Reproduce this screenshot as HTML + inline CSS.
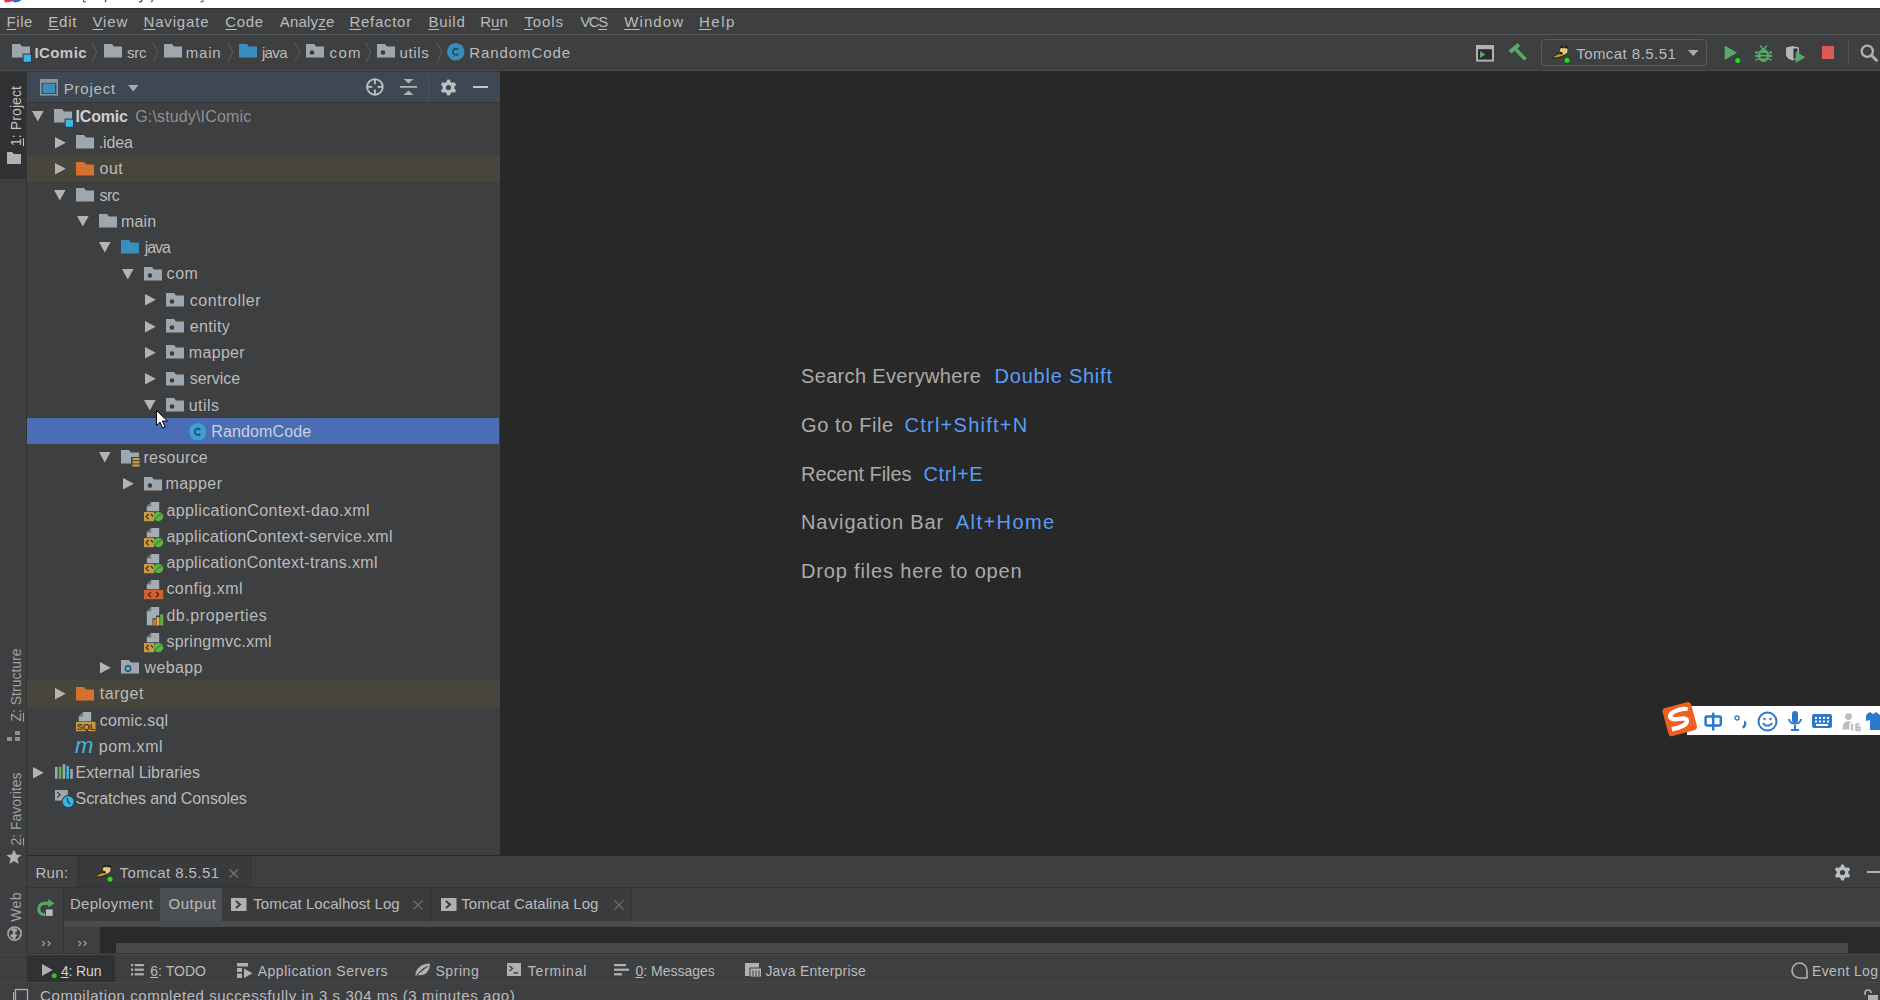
<!DOCTYPE html>
<html><head><meta charset="utf-8"><style>
html,body{margin:0;padding:0;width:1880px;height:1000px;overflow:hidden;background:#3E3F41;position:relative;font-family:"Liberation Sans",sans-serif;}
.t{position:absolute;white-space:pre;}
u{text-decoration:underline;text-underline-offset:2px;text-decoration-thickness:1px;}
u.s{text-underline-offset:1px;}
svg{overflow:visible}
</style></head><body>
<div style="position:absolute;left:0px;top:0px;width:1880px;height:8px;background:#FFFFFF;"></div>
<svg style="position:absolute;left:0px;top:0px;" width="40" height="8" viewBox="0 0 40 8"><path d="M4 0H13L12.5 1.6L5 2.6Z" fill="#D9345A"/><path d="M12.5 0H21.5L19.5 1.4L15 2.6L13 1.6Z" fill="#1E6FD9"/></svg>
<svg style="position:absolute;left:82px;top:0px;" width="130" height="3" viewBox="0 0 130 3"><path d="M1.5 0V1.8H4" stroke="#444" stroke-width="1" fill="none"/><path d="M24 0L23 2" stroke="#444" stroke-width="1.2"/><path d="M60 0C60 1.5 59 2 57 2" stroke="#444" stroke-width="1.2" fill="none"/><path d="M70.5 0L69.5 2" stroke="#444" stroke-width="1.2"/><path d="M121 0V1.8H118.5" stroke="#444" stroke-width="1" fill="none"/></svg>
<div style="position:absolute;left:0px;top:8px;width:1880px;height:1px;background:#2B2D2F;"></div>
<div style="position:absolute;left:0px;top:9px;width:1880px;height:25px;background:#3E3F41;"></div>
<div style="position:absolute;left:0px;top:34px;width:1880px;height:1px;background:#545658;"></div>
<div class="t" style="left:6.6px;top:14.3px;font-size:15px;line-height:15px;color:#BBBBBB;letter-spacing:0.533px;font-weight:normal;"><u>F</u>ile</div>
<div class="t" style="left:48.2px;top:14.3px;font-size:15px;line-height:15px;color:#BBBBBB;letter-spacing:0.833px;font-weight:normal;"><u>E</u>dit</div>
<div class="t" style="left:92.5px;top:14.3px;font-size:15px;line-height:15px;color:#BBBBBB;letter-spacing:0.867px;font-weight:normal;"><u>V</u>iew</div>
<div class="t" style="left:143.5px;top:14.3px;font-size:15px;line-height:15px;color:#BBBBBB;letter-spacing:0.829px;font-weight:normal;"><u>N</u>avigate</div>
<div class="t" style="left:225.3px;top:14.3px;font-size:15px;line-height:15px;color:#BBBBBB;letter-spacing:0.667px;font-weight:normal;"><u>C</u>ode</div>
<div class="t" style="left:279.7px;top:14.3px;font-size:15px;line-height:15px;color:#BBBBBB;letter-spacing:0.217px;font-weight:normal;">Analy<u>z</u>e</div>
<div class="t" style="left:349.4px;top:14.3px;font-size:15px;line-height:15px;color:#BBBBBB;letter-spacing:0.729px;font-weight:normal;"><u>R</u>efactor</div>
<div class="t" style="left:428.4px;top:14.3px;font-size:15px;line-height:15px;color:#BBBBBB;letter-spacing:0.750px;font-weight:normal;"><u>B</u>uild</div>
<div class="t" style="left:480.2px;top:14.3px;font-size:15px;line-height:15px;color:#BBBBBB;letter-spacing:0.000px;font-weight:normal;">R<u>u</u>n</div>
<div class="t" style="left:524.4px;top:14.3px;font-size:15px;line-height:15px;color:#BBBBBB;letter-spacing:0.925px;font-weight:normal;"><u>T</u>ools</div>
<div class="t" style="left:580.2px;top:14.3px;font-size:15px;line-height:15px;color:#BBBBBB;letter-spacing:-1.350px;font-weight:normal;">VC<u>S</u></div>
<div class="t" style="left:624.2px;top:14.3px;font-size:15px;line-height:15px;color:#BBBBBB;letter-spacing:1.100px;font-weight:normal;"><u>W</u>indow</div>
<div class="t" style="left:699.1px;top:14.3px;font-size:15px;line-height:15px;color:#BBBBBB;letter-spacing:1.433px;font-weight:normal;"><u>H</u>elp</div>
<div style="position:absolute;left:0px;top:35px;width:1880px;height:35px;background:#3E3F41;"></div>
<div style="position:absolute;left:0px;top:65px;width:1880px;height:5px;background:#3F3F40;"></div>
<div style="position:absolute;left:0px;top:70px;width:1880px;height:1px;background:#4A4B4C;"></div>
<svg style="position:absolute;left:12px;top:44.3px;" width="20" height="17" viewBox="0 0 20 17"><path d="M0 0H8L10 2.5H18V13.6H0Z" fill="#9EA7AE"/><rect x="10.6" y="9.6" width="9.4" height="9" fill="#263A44"/><rect x="11.6" y="10.6" width="7.4" height="7.2" fill="#42B4E2"/></svg>
<div class="t" style="left:34.4px;top:45.0px;font-size:15px;line-height:15px;color:#C8C8C8;letter-spacing:0.440px;font-weight:bold;">IComic</div>
<svg style="position:absolute;left:91px;top:41.5px;" width="7" height="21" viewBox="0 0 7 21"><path d="M0.8 0.5L5.8 10.5L0.8 20.5" stroke="#55585A" stroke-width="1.1" fill="none"/></svg>
<svg style="position:absolute;left:103.7px;top:44.3px;" width="20" height="17" viewBox="0 0 20 17"><path d="M0 0H8L10 2.5H18V13.6H0Z" fill="#9EA7AE"/></svg>
<div class="t" style="left:126.9px;top:45.0px;font-size:15px;line-height:15px;color:#BBBBBB;letter-spacing:-0.200px;font-weight:normal;">src</div>
<svg style="position:absolute;left:152.3px;top:41.5px;" width="7" height="21" viewBox="0 0 7 21"><path d="M0.8 0.5L5.8 10.5L0.8 20.5" stroke="#55585A" stroke-width="1.1" fill="none"/></svg>
<svg style="position:absolute;left:164px;top:44.3px;" width="20" height="17" viewBox="0 0 20 17"><path d="M0 0H8L10 2.5H18V13.6H0Z" fill="#9EA7AE"/></svg>
<div class="t" style="left:185.7px;top:45.0px;font-size:15px;line-height:15px;color:#BBBBBB;letter-spacing:0.833px;font-weight:normal;">main</div>
<svg style="position:absolute;left:226.5px;top:41.5px;" width="7" height="21" viewBox="0 0 7 21"><path d="M0.8 0.5L5.8 10.5L0.8 20.5" stroke="#55585A" stroke-width="1.1" fill="none"/></svg>
<svg style="position:absolute;left:239.4px;top:44.3px;" width="20" height="17" viewBox="0 0 20 17"><path d="M0 0H8L10 2.5H18V13.6H0Z" fill="#3A8EBE"/></svg>
<div class="t" style="left:261.9px;top:45.0px;font-size:15px;line-height:15px;color:#BBBBBB;letter-spacing:-0.633px;font-weight:normal;">java</div>
<svg style="position:absolute;left:293.5px;top:41.5px;" width="7" height="21" viewBox="0 0 7 21"><path d="M0.8 0.5L5.8 10.5L0.8 20.5" stroke="#55585A" stroke-width="1.1" fill="none"/></svg>
<svg style="position:absolute;left:306px;top:44.3px;" width="20" height="17" viewBox="0 0 20 17"><path d="M0 0H8L10 2.5H18V13.6H0Z" fill="#9EA7AE"/><circle cx="6" cy="8.5" r="2.3" fill="#3A3D40"/></svg>
<div class="t" style="left:329.6px;top:45.0px;font-size:15px;line-height:15px;color:#BBBBBB;letter-spacing:1.300px;font-weight:normal;">com</div>
<svg style="position:absolute;left:365px;top:41.5px;" width="7" height="21" viewBox="0 0 7 21"><path d="M0.8 0.5L5.8 10.5L0.8 20.5" stroke="#55585A" stroke-width="1.1" fill="none"/></svg>
<svg style="position:absolute;left:377px;top:44.3px;" width="20" height="17" viewBox="0 0 20 17"><path d="M0 0H8L10 2.5H18V13.6H0Z" fill="#9EA7AE"/><circle cx="6" cy="8.5" r="2.3" fill="#3A3D40"/></svg>
<div class="t" style="left:399.4px;top:45.0px;font-size:15px;line-height:15px;color:#BBBBBB;letter-spacing:0.675px;font-weight:normal;">utils</div>
<svg style="position:absolute;left:436px;top:41.5px;" width="7" height="21" viewBox="0 0 7 21"><path d="M0.8 0.5L5.8 10.5L0.8 20.5" stroke="#55585A" stroke-width="1.1" fill="none"/></svg>
<svg style="position:absolute;left:447.2px;top:43.2px;" width="17.5" height="17.5" viewBox="0 0 17.5 17.5"><circle cx="8.75" cy="8.75" r="8.75" fill="#3A8DB8"/><path d="M11.35 6.55A3.2 3.2 0 1 0 11.35 10.95" stroke="#1E4D66" stroke-width="1.7" fill="none"/></svg>
<div class="t" style="left:469.3px;top:45.0px;font-size:15px;line-height:15px;color:#BBBBBB;letter-spacing:0.922px;font-weight:normal;">RandomCode</div>
<svg style="position:absolute;left:1476px;top:45px;" width="18" height="16" viewBox="0 0 18 16"><rect x="1" y="1" width="16" height="14.6" fill="#2B2B2B" stroke="#AFB1B3" stroke-width="2"/><rect x="0" y="0" width="18" height="4.2" fill="#AFB1B3"/><path d="M4 6L9.5 9.5L4 13Z" fill="#59A869"/></svg>
<svg style="position:absolute;left:1506px;top:42px;" width="22" height="20" viewBox="0 0 22 20"><path d="M4 10L13 2.5" stroke="#59A869" stroke-width="4.2"/><path d="M8.5 6L19.5 17.5" stroke="#59A869" stroke-width="3.6"/></svg>
<div style="position:absolute;left:1541.4px;top:39.4px;width:166px;height:27px;background:transparent;border:1.2px solid #5A5C5E;border-radius:4px;box-sizing:border-box;"></div>
<svg style="position:absolute;left:1552px;top:43px;" width="20" height="20" viewBox="0 0 20 20"><path d="M0.3 15C3 12.2 6 10.8 9.2 10.2L13.2 10.8C11.5 13.6 6.5 14.8 0.3 15Z" fill="#C9A030" stroke="#1A1200" stroke-width="0.8"/><path d="M8 5L9.5 3.6L11 5.2H13.2L14.8 3.6L15.6 5.6L15.2 9.6L12.6 11.6L9.6 11.2L8.2 8.6Z" fill="#E6CC78"/><path d="M8 5.4L9.5 3.6L11 5.2M13.2 5.2L14.8 3.6L15.6 5.8" stroke="#111" stroke-width="1.2" fill="none"/><circle cx="9.3" cy="10.2" r="1.3" fill="#111"/><circle cx="15" cy="17.2" r="3.1" fill="#145214"/><circle cx="15" cy="17.2" r="2.5" fill="#22DD22"/></svg>
<div class="t" style="left:1576.2px;top:46.1px;font-size:15px;line-height:15px;color:#BBBBBB;letter-spacing:0.450px;font-weight:normal;">Tomcat 8.5.51</div>
<svg style="position:absolute;left:1687.8px;top:50px;" width="10.5" height="6.5" viewBox="0 0 10.5 6.5"><path d="M0 0H10.5L5.25 6.3Z" fill="#A9AAAB"/></svg>
<svg style="position:absolute;left:1724px;top:45px;" width="17" height="19" viewBox="0 0 17 19"><path d="M0.7 0.5L13 7.7L0.7 14.9Z" fill="#59A869"/><circle cx="13.7" cy="15.6" r="3.1" fill="#145214"/><circle cx="13.7" cy="15.6" r="2.5" fill="#22DD22"/></svg>
<svg style="position:absolute;left:1754.5px;top:44.5px;" width="17" height="18" viewBox="0 0 17 18"><path d="M5 0.5L8.5 4.5L12 0.5" stroke="#59A869" stroke-width="1.5" fill="none"/><ellipse cx="8.5" cy="10.5" rx="5.8" ry="6.5" fill="#59A869"/><path d="M0 7.5H3M17 7.5H14M0 11H3M17 11H14M0.5 15L3.5 14M16.5 15L13.5 14" stroke="#59A869" stroke-width="1.8"/><rect x="5.5" y="8" width="6" height="1.8" fill="#3E3F41"/><rect x="5.5" y="11.5" width="6" height="1.8" fill="#3E3F41"/></svg>
<svg style="position:absolute;left:1786px;top:45.9px;" width="20" height="18" viewBox="0 0 20 18"><path d="M0 1.5L6.5 0L13 1.5V8C13 11.5 10 13.5 6.5 14.5C3 13.5 0 11.5 0 8Z" fill="#B4B6B8"/><path d="M7.5 2.5H11.5V9C11.5 11 10 12 8.5 12.8L7.5 13Z" fill="#2E2F30"/><path d="M9.6 5.3L19.2 11.2L9.6 17.1Z" fill="#59A869"/></svg>
<div style="position:absolute;left:1821.7px;top:46.3px;width:12.7px;height:13.2px;background:#DB5A55;"></div>
<div style="position:absolute;left:1848px;top:40px;width:1px;height:24px;background:#515354;"></div>
<svg style="position:absolute;left:1859px;top:43px;" width="21" height="21" viewBox="0 0 21 21"><circle cx="8.3" cy="8.2" r="5.6" fill="none" stroke="#AFB1B3" stroke-width="2.3"/><path d="M12.4 12.3L18.4 18.3" stroke="#AFB1B3" stroke-width="2.8"/></svg>
<div style="position:absolute;left:0px;top:71px;width:26px;height:883px;background:#3E3F41;"></div>
<div style="position:absolute;left:0px;top:71px;width:26px;height:108px;background:#2F3132;"></div>
<div class="t" style="left:16.1px;top:116px;font-size:14px;line-height:14px;color:#C4C4C4;letter-spacing:0.1px;transform:translate(-50%,-50%) rotate(-90deg);"><u>1</u>: Project</div>
<svg style="position:absolute;left:7px;top:152px;" width="14" height="12" viewBox="0 0 14 12"><path d="M0 0H5L7 2H14V12H0Z" fill="#AFB1B3"/></svg>
<div class="t" style="left:16.1px;top:684.6px;font-size:14px;line-height:14px;color:#A0A2A4;letter-spacing:0px;transform:translate(-50%,-50%) rotate(-90deg);"><u>Z</u>: Structure</div>
<svg style="position:absolute;left:7px;top:731px;" width="14" height="10" viewBox="0 0 14 10"><rect x="8" y="0" width="5" height="4" fill="#8E9194"/><rect x="0" y="6" width="5" height="4" fill="#8E9194"/><rect x="8" y="6" width="5" height="4" fill="#8E9194"/></svg>
<div class="t" style="left:16.1px;top:808.7px;font-size:14px;line-height:14px;color:#A0A2A4;letter-spacing:0px;transform:translate(-50%,-50%) rotate(-90deg);"><u>2</u>: Favorites</div>
<svg style="position:absolute;left:6px;top:849px;" width="16" height="16" viewBox="0 0 16 16"><path d="M8 0.5L10.2 5.6L15.5 6L11.4 9.5L12.7 15L8 12.1L3.3 15L4.6 9.5L0.5 6L5.8 5.6Z" fill="#AFB1B3"/></svg>
<div class="t" style="left:16.1px;top:907.3px;font-size:14px;line-height:14px;color:#A0A2A4;letter-spacing:0.4px;transform:translate(-50%,-50%) rotate(-90deg);">Web</div>
<svg style="position:absolute;left:6.5px;top:926px;" width="16" height="16" viewBox="0 0 16 16"><circle cx="7.6" cy="7.6" r="6.6" fill="none" stroke="#A6A8AA" stroke-width="1.6"/><path d="M3 4.5C5 4 6.5 5 6 7C5.5 8.5 3.5 8.5 3.2 10C4.5 11 6 12 6.5 13.5L8.5 13C8 11 9.5 10 10.5 9C9.5 8 8 8.5 7.8 7C8.5 5.5 10 5.8 10.5 4C9.5 2.5 7 2 5 2.5Z" fill="#A6A8AA"/><path d="M12 8.5L13.5 10L12.5 12Z" fill="#A6A8AA"/></svg>
<div style="position:absolute;left:26px;top:71px;width:1px;height:883px;background:#333435;"></div>
<div style="position:absolute;left:27px;top:71px;width:473px;height:785px;background:#3E3F41;"></div>
<div style="position:absolute;left:27px;top:71px;width:473px;height:31px;background:#3D4854;"></div>
<div style="position:absolute;left:0px;top:70.6px;width:500px;height:1px;background:#323436;"></div>
<div style="position:absolute;left:27px;top:102px;width:473px;height:1px;background:#34373A;"></div>
<svg style="position:absolute;left:40px;top:79.3px;" width="18" height="16.6" viewBox="0 0 18 16.6"><rect x="0.8" y="0.8" width="16.4" height="15" fill="none" stroke="#8A959D" stroke-width="1.6"/><rect x="0.8" y="0.8" width="16.4" height="3" fill="#8A959D"/><rect x="2.2" y="4" width="13.6" height="10.6" fill="#2F4250"/><rect x="2.8" y="4.6" width="12.4" height="9.6" fill="#3B8EBA"/></svg>
<div class="t" style="left:63.8px;top:80.9px;font-size:15px;line-height:15px;color:#BBBBBB;letter-spacing:0.783px;font-weight:normal;">Project</div>
<svg style="position:absolute;left:128px;top:85px;" width="10.5" height="7" viewBox="0 0 10.5 7"><path d="M0 0H10.5L5.25 6.5Z" fill="#A9AAAB"/></svg>
<svg style="position:absolute;left:366px;top:78px;" width="18" height="18" viewBox="0 0 18 18"><circle cx="8.9" cy="8.9" r="7.8" fill="none" stroke="#BAC0C6" stroke-width="1.9"/><path d="M8.9 1.5V6.3M8.9 11.5V16.3M1.5 8.9H6.3M11.5 8.9H16.3" stroke="#BAC0C6" stroke-width="1.9"/></svg>
<svg style="position:absolute;left:400px;top:79px;" width="17" height="16" viewBox="0 0 17 16"><path d="M3.5 0H13.5L8.5 4.5Z" fill="#AFB1B3"/><rect x="0" y="7" width="17" height="1.8" fill="#AFB1B3"/><path d="M3.5 16H13.5L8.5 11.5Z" fill="#AFB1B3"/></svg>
<div style="position:absolute;left:428px;top:73px;width:1px;height:27px;background:#4A5561;"></div>
<svg style="position:absolute;left:440.2px;top:78.5px;" width="17" height="17" viewBox="0 0 17 17"><circle cx="8.5" cy="8.5" r="8" fill="#BCC0C4"/><circle cx="16.80" cy="8.50" r="2.5" fill="#3D4854"/><circle cx="12.65" cy="15.69" r="2.5" fill="#3D4854"/><circle cx="4.35" cy="15.69" r="2.5" fill="#3D4854"/><circle cx="0.20" cy="8.50" r="2.5" fill="#3D4854"/><circle cx="4.35" cy="1.31" r="2.5" fill="#3D4854"/><circle cx="12.65" cy="1.31" r="2.5" fill="#3D4854"/><circle cx="8.5" cy="8.5" r="2.6" fill="#3D4854"/></svg>
<div style="position:absolute;left:473px;top:85.8px;width:15.4px;height:2.4px;background:#C2C7CC;"></div>
<div style="position:absolute;left:27px;top:155.4px;width:471px;height:26.5px;background:#48453A;"></div>
<div style="position:absolute;left:27px;top:680.4px;width:471px;height:26.5px;background:#48453A;"></div>
<div style="position:absolute;left:498px;top:155.4px;width:2px;height:26.5px;background:#454545;"></div>
<div style="position:absolute;left:498px;top:680.4px;width:2px;height:26.5px;background:#454545;"></div>
<div style="position:absolute;left:27px;top:418.2px;width:472px;height:25.5px;background:#4A6DB4;"></div>
<svg style="position:absolute;left:32.0px;top:111.1px;" width="12" height="11" viewBox="0 0 12 11"><path d="M0 0H11.6L5.8 10.4Z" fill="#B2B3B4"/></svg>
<svg style="position:absolute;left:54.0px;top:109.1px;" width="20" height="17" viewBox="0 0 20 17"><path d="M0 0H8L10 2.5H18V13.6H0Z" fill="#9EA7AE"/><rect x="10.6" y="9.6" width="9.4" height="9" fill="#263A44"/><rect x="11.6" y="10.6" width="7.4" height="7.2" fill="#42B4E2"/></svg>
<div class="t" style="left:75.6px;top:108.86px;font-size:16px;line-height:16px;color:#CFCFCF;letter-spacing:-0.220px;font-weight:bold;">IComic</div>
<div class="t" style="left:135.2px;top:108.86px;font-size:16px;line-height:16px;color:#8F9193;letter-spacing:0.157px;font-weight:normal;">G:\study\IComic</div>
<svg style="position:absolute;left:55.24999999999999px;top:136.85px;" width="11" height="12" viewBox="0 0 11 12"><path d="M0 0L10.8 5.7L0 11.4Z" fill="#B2B3B4"/></svg>
<svg style="position:absolute;left:76.45px;top:135.35px;" width="20" height="17" viewBox="0 0 20 17"><path d="M0 0H8L10 2.5H18V13.6H0Z" fill="#9EA7AE"/></svg>
<div class="t" style="left:98.8px;top:135.11px;font-size:16px;line-height:16px;color:#BBBBBB;letter-spacing:-0.150px;font-weight:normal;">.idea</div>
<svg style="position:absolute;left:55.24999999999999px;top:163.1px;" width="11" height="12" viewBox="0 0 11 12"><path d="M0 0L10.8 5.7L0 11.4Z" fill="#B2B3B4"/></svg>
<svg style="position:absolute;left:76.45px;top:161.6px;" width="20" height="17" viewBox="0 0 20 17"><path d="M0 0H8L10 2.5H18V13.6H0Z" fill="#D5702F"/></svg>
<div class="t" style="left:99.6px;top:161.36px;font-size:16px;line-height:16px;color:#BBBBBB;letter-spacing:0.450px;font-weight:normal;">out</div>
<svg style="position:absolute;left:54.449999999999996px;top:189.85px;" width="12" height="11" viewBox="0 0 12 11"><path d="M0 0H11.6L5.8 10.4Z" fill="#B2B3B4"/></svg>
<svg style="position:absolute;left:76.45px;top:187.85px;" width="20" height="17" viewBox="0 0 20 17"><path d="M0 0H8L10 2.5H18V13.6H0Z" fill="#9EA7AE"/></svg>
<div class="t" style="left:99.6px;top:187.61px;font-size:16px;line-height:16px;color:#BBBBBB;letter-spacing:-0.600px;font-weight:normal;">src</div>
<svg style="position:absolute;left:76.89999999999999px;top:216.1px;" width="12" height="11" viewBox="0 0 12 11"><path d="M0 0H11.6L5.8 10.4Z" fill="#B2B3B4"/></svg>
<svg style="position:absolute;left:98.9px;top:214.1px;" width="20" height="17" viewBox="0 0 20 17"><path d="M0 0H8L10 2.5H18V13.6H0Z" fill="#9EA7AE"/></svg>
<div class="t" style="left:121.1px;top:213.86px;font-size:16px;line-height:16px;color:#BBBBBB;letter-spacing:0.100px;font-weight:normal;">main</div>
<svg style="position:absolute;left:99.35px;top:242.35px;" width="12" height="11" viewBox="0 0 12 11"><path d="M0 0H11.6L5.8 10.4Z" fill="#B2B3B4"/></svg>
<svg style="position:absolute;left:121.35px;top:240.35px;" width="20" height="17" viewBox="0 0 20 17"><path d="M0 0H8L10 2.5H18V13.6H0Z" fill="#3A8EBE"/></svg>
<div class="t" style="left:144.7px;top:240.11px;font-size:16px;line-height:16px;color:#BBBBBB;letter-spacing:-1.033px;font-weight:normal;">java</div>
<svg style="position:absolute;left:121.79999999999998px;top:268.6px;" width="12" height="11" viewBox="0 0 12 11"><path d="M0 0H11.6L5.8 10.4Z" fill="#B2B3B4"/></svg>
<svg style="position:absolute;left:143.8px;top:266.6px;" width="20" height="17" viewBox="0 0 20 17"><path d="M0 0H8L10 2.5H18V13.6H0Z" fill="#9EA7AE"/><circle cx="6" cy="8.5" r="2.3" fill="#3A3D40"/></svg>
<div class="t" style="left:166.6px;top:266.36px;font-size:16px;line-height:16px;color:#BBBBBB;letter-spacing:0.550px;font-weight:normal;">com</div>
<svg style="position:absolute;left:145.05px;top:294.35px;" width="11" height="12" viewBox="0 0 11 12"><path d="M0 0L10.8 5.7L0 11.4Z" fill="#B2B3B4"/></svg>
<svg style="position:absolute;left:166.25px;top:292.85px;" width="20" height="17" viewBox="0 0 20 17"><path d="M0 0H8L10 2.5H18V13.6H0Z" fill="#9EA7AE"/><circle cx="6" cy="8.5" r="2.3" fill="#3A3D40"/></svg>
<div class="t" style="left:189.7px;top:292.61px;font-size:16px;line-height:16px;color:#BBBBBB;letter-spacing:0.567px;font-weight:normal;">controller</div>
<svg style="position:absolute;left:145.05px;top:320.6px;" width="11" height="12" viewBox="0 0 11 12"><path d="M0 0L10.8 5.7L0 11.4Z" fill="#B2B3B4"/></svg>
<svg style="position:absolute;left:166.25px;top:319.1px;" width="20" height="17" viewBox="0 0 20 17"><path d="M0 0H8L10 2.5H18V13.6H0Z" fill="#9EA7AE"/><circle cx="6" cy="8.5" r="2.3" fill="#3A3D40"/></svg>
<div class="t" style="left:189.8px;top:318.86px;font-size:16px;line-height:16px;color:#BBBBBB;letter-spacing:0.360px;font-weight:normal;">entity</div>
<svg style="position:absolute;left:145.05px;top:346.85px;" width="11" height="12" viewBox="0 0 11 12"><path d="M0 0L10.8 5.7L0 11.4Z" fill="#B2B3B4"/></svg>
<svg style="position:absolute;left:166.25px;top:345.35px;" width="20" height="17" viewBox="0 0 20 17"><path d="M0 0H8L10 2.5H18V13.6H0Z" fill="#9EA7AE"/><circle cx="6" cy="8.5" r="2.3" fill="#3A3D40"/></svg>
<div class="t" style="left:188.8px;top:345.11px;font-size:16px;line-height:16px;color:#BBBBBB;letter-spacing:0.320px;font-weight:normal;">mapper</div>
<svg style="position:absolute;left:145.05px;top:373.1px;" width="11" height="12" viewBox="0 0 11 12"><path d="M0 0L10.8 5.7L0 11.4Z" fill="#B2B3B4"/></svg>
<svg style="position:absolute;left:166.25px;top:371.6px;" width="20" height="17" viewBox="0 0 20 17"><path d="M0 0H8L10 2.5H18V13.6H0Z" fill="#9EA7AE"/><circle cx="6" cy="8.5" r="2.3" fill="#3A3D40"/></svg>
<div class="t" style="left:189.8px;top:371.36px;font-size:16px;line-height:16px;color:#BBBBBB;letter-spacing:-0.050px;font-weight:normal;">service</div>
<svg style="position:absolute;left:144.25px;top:399.85px;" width="12" height="11" viewBox="0 0 12 11"><path d="M0 0H11.6L5.8 10.4Z" fill="#B2B3B4"/></svg>
<svg style="position:absolute;left:166.25px;top:397.85px;" width="20" height="17" viewBox="0 0 20 17"><path d="M0 0H8L10 2.5H18V13.6H0Z" fill="#9EA7AE"/><circle cx="6" cy="8.5" r="2.3" fill="#3A3D40"/></svg>
<div class="t" style="left:188.8px;top:397.61px;font-size:16px;line-height:16px;color:#BBBBBB;letter-spacing:0.425px;font-weight:normal;">utils</div>
<svg style="position:absolute;left:188.89999999999998px;top:422.90000000000003px;" width="17.5" height="17.5" viewBox="0 0 17.5 17.5"><circle cx="8.75" cy="8.75" r="8.75" fill="#3E9FD3"/><path d="M11.35 6.55A3.2 3.2 0 1 0 11.35 10.95" stroke="#1C4E6C" stroke-width="1.7" fill="none"/></svg>
<div class="t" style="left:211.3px;top:423.86px;font-size:16px;line-height:16px;color:#CCD2DD;letter-spacing:0.133px;font-weight:normal;">RandomCode</div>
<svg style="position:absolute;left:99.35px;top:452.35px;" width="12" height="11" viewBox="0 0 12 11"><path d="M0 0H11.6L5.8 10.4Z" fill="#B2B3B4"/></svg>
<svg style="position:absolute;left:121.35px;top:450.35px;" width="20" height="17" viewBox="0 0 20 17"><path d="M0 0H8L10 2.5H18V13.6H0Z" fill="#9EA7AE"/><rect x="10" y="7" width="10" height="10" fill="#3E3F41"/><rect x="11.5" y="8" width="7" height="2.2" fill="#C9A04A"/><rect x="11.5" y="11.2" width="7" height="2.2" fill="#C9A04A"/><rect x="11.5" y="14.4" width="7" height="2.2" fill="#C9A04A"/></svg>
<div class="t" style="left:143.5px;top:450.11px;font-size:16px;line-height:16px;color:#BBBBBB;letter-spacing:0.286px;font-weight:normal;">resource</div>
<svg style="position:absolute;left:122.6px;top:478.1px;" width="11" height="12" viewBox="0 0 11 12"><path d="M0 0L10.8 5.7L0 11.4Z" fill="#B2B3B4"/></svg>
<svg style="position:absolute;left:143.8px;top:476.6px;" width="20" height="17" viewBox="0 0 20 17"><path d="M0 0H8L10 2.5H18V13.6H0Z" fill="#9EA7AE"/><circle cx="6" cy="8.5" r="2.3" fill="#3A3D40"/></svg>
<div class="t" style="left:165.4px;top:476.36px;font-size:16px;line-height:16px;color:#BBBBBB;letter-spacing:0.480px;font-weight:normal;">mapper</div>
<svg style="position:absolute;left:143.8px;top:501.65000000000003px;" width="20" height="20" viewBox="0 0 20 20"><path d="M7.2 0H15.2V9.2H2.8V4.6Z" fill="#A4ADB4"/><path d="M2.8 4.6L7.2 0V4.6Z" fill="#6E767C"/><rect x="0" y="10" width="10" height="9.2" fill="#C99A45"/><path d="M4.6 12L2.2 14.6L4.6 17.2M7 12L9 14.6" stroke="#4A3413" stroke-width="1.3" fill="none"/><ellipse cx="14.2" cy="14.6" rx="5" ry="4.6" fill="#5DB341"/><path d="M10.8 17.5C12.5 15 14.5 13.5 17.5 12.2" stroke="#2F6A22" stroke-width="1" fill="none"/></svg>
<div class="t" style="left:166.4px;top:502.61px;font-size:16px;line-height:16px;color:#BBBBBB;letter-spacing:0.404px;font-weight:normal;">applicationContext-dao.xml</div>
<svg style="position:absolute;left:143.8px;top:527.9px;" width="20" height="20" viewBox="0 0 20 20"><path d="M7.2 0H15.2V9.2H2.8V4.6Z" fill="#A4ADB4"/><path d="M2.8 4.6L7.2 0V4.6Z" fill="#6E767C"/><rect x="0" y="10" width="10" height="9.2" fill="#C99A45"/><path d="M4.6 12L2.2 14.6L4.6 17.2M7 12L9 14.6" stroke="#4A3413" stroke-width="1.3" fill="none"/><ellipse cx="14.2" cy="14.6" rx="5" ry="4.6" fill="#5DB341"/><path d="M10.8 17.5C12.5 15 14.5 13.5 17.5 12.2" stroke="#2F6A22" stroke-width="1" fill="none"/></svg>
<div class="t" style="left:166.4px;top:528.86px;font-size:16px;line-height:16px;color:#BBBBBB;letter-spacing:0.314px;font-weight:normal;">applicationContext-service.xml</div>
<svg style="position:absolute;left:143.8px;top:554.15px;" width="20" height="20" viewBox="0 0 20 20"><path d="M7.2 0H15.2V9.2H2.8V4.6Z" fill="#A4ADB4"/><path d="M2.8 4.6L7.2 0V4.6Z" fill="#6E767C"/><rect x="0" y="10" width="10" height="9.2" fill="#C99A45"/><path d="M4.6 12L2.2 14.6L4.6 17.2M7 12L9 14.6" stroke="#4A3413" stroke-width="1.3" fill="none"/><ellipse cx="14.2" cy="14.6" rx="5" ry="4.6" fill="#5DB341"/><path d="M10.8 17.5C12.5 15 14.5 13.5 17.5 12.2" stroke="#2F6A22" stroke-width="1" fill="none"/></svg>
<div class="t" style="left:166.4px;top:555.11px;font-size:16px;line-height:16px;color:#BBBBBB;letter-spacing:0.344px;font-weight:normal;">applicationContext-trans.xml</div>
<svg style="position:absolute;left:143.8px;top:580.4px;" width="20" height="20" viewBox="0 0 20 20"><path d="M7.2 0H15.2V9.2H2.8V4.6Z" fill="#A4ADB4"/><path d="M2.8 4.6L7.2 0V4.6Z" fill="#6E767C"/><rect x="0" y="10" width="19.2" height="9.2" fill="#CF6231"/><path d="M7 12L4.4 14.6L7 17.2M12 12L14.6 14.6L12 17.2" stroke="#5A2410" stroke-width="1.3" fill="none"/></svg>
<div class="t" style="left:166.4px;top:581.36px;font-size:16px;line-height:16px;color:#BBBBBB;letter-spacing:0.467px;font-weight:normal;">config.xml</div>
<svg style="position:absolute;left:143.8px;top:606.65px;" width="20" height="20" viewBox="0 0 20 20"><path d="M7.2 0H15.2V18.2H2.8V4.6Z" fill="#A4ADB4"/><path d="M2.8 4.6L7.2 0V4.6Z" fill="#6E767C"/><path d="M8.5 18.4V11.2H12V8.6H15.5V6H20V18.4Z" fill="#3E3F41"/><rect x="9.2" y="12.4" width="2.8" height="6" fill="#E0703A"/><rect x="12.6" y="10.2" width="2.8" height="8.2" fill="#E8B53E"/><rect x="16.2" y="7.4" width="3" height="11" fill="#5DB341"/></svg>
<div class="t" style="left:166.4px;top:607.61px;font-size:16px;line-height:16px;color:#BBBBBB;letter-spacing:0.575px;font-weight:normal;">db.properties</div>
<svg style="position:absolute;left:143.8px;top:632.9px;" width="20" height="20" viewBox="0 0 20 20"><path d="M7.2 0H15.2V9.2H2.8V4.6Z" fill="#A4ADB4"/><path d="M2.8 4.6L7.2 0V4.6Z" fill="#6E767C"/><rect x="0" y="10" width="10" height="9.2" fill="#C99A45"/><path d="M4.6 12L2.2 14.6L4.6 17.2M7 12L9 14.6" stroke="#4A3413" stroke-width="1.3" fill="none"/><ellipse cx="14.2" cy="14.6" rx="5" ry="4.6" fill="#5DB341"/><path d="M10.8 17.5C12.5 15 14.5 13.5 17.5 12.2" stroke="#2F6A22" stroke-width="1" fill="none"/></svg>
<div class="t" style="left:166.4px;top:633.86px;font-size:16px;line-height:16px;color:#BBBBBB;letter-spacing:0.250px;font-weight:normal;">springmvc.xml</div>
<svg style="position:absolute;left:100.15px;top:661.85px;" width="11" height="12" viewBox="0 0 11 12"><path d="M0 0L10.8 5.7L0 11.4Z" fill="#B2B3B4"/></svg>
<svg style="position:absolute;left:121.35px;top:660.35px;" width="20" height="17" viewBox="0 0 20 17"><path d="M0 0H8L10 2.5H18V13.6H0Z" fill="#9EA7AE"/><circle cx="7" cy="8.5" r="3.4" fill="#3A3D40"/><circle cx="7" cy="8.5" r="2.3" fill="#3FB1E4"/></svg>
<div class="t" style="left:144.5px;top:660.11px;font-size:16px;line-height:16px;color:#BBBBBB;letter-spacing:0.360px;font-weight:normal;">webapp</div>
<svg style="position:absolute;left:55.24999999999999px;top:688.1px;" width="11" height="12" viewBox="0 0 11 12"><path d="M0 0L10.8 5.7L0 11.4Z" fill="#B2B3B4"/></svg>
<svg style="position:absolute;left:76.45px;top:686.6px;" width="20" height="17" viewBox="0 0 20 17"><path d="M0 0H8L10 2.5H18V13.6H0Z" fill="#D5702F"/></svg>
<div class="t" style="left:99.7px;top:686.36px;font-size:16px;line-height:16px;color:#BBBBBB;letter-spacing:0.580px;font-weight:normal;">target</div>
<svg style="position:absolute;left:76.45px;top:711.65px;" width="20" height="20" viewBox="0 0 20 20"><path d="M7.2 0H15.2V9.2H2.8V4.6Z" fill="#A4ADB4"/><path d="M2.8 4.6L7.2 0V4.6Z" fill="#6E767C"/><rect x="0" y="9.8" width="19.5" height="9.4" fill="#C99A45"/><text x="0.8" y="18.3" font-family="Liberation Sans" font-weight="bold" font-size="9.2" fill="#4A3413" letter-spacing="-0.1">SQL</text></svg>
<div class="t" style="left:99.7px;top:712.61px;font-size:16px;line-height:16px;color:#BBBBBB;letter-spacing:0.225px;font-weight:normal;">comic.sql</div>
<svg style="position:absolute;left:76.45px;top:737.9px;" width="20" height="20" viewBox="0 0 20 20"><text x="-1" y="15" font-family="Liberation Sans" font-style="italic" font-size="22" fill="#46B5DF">m</text></svg>
<div class="t" style="left:98.7px;top:738.86px;font-size:16px;line-height:16px;color:#BBBBBB;letter-spacing:0.583px;font-weight:normal;">pom.xml</div>
<svg style="position:absolute;left:32.8px;top:766.85px;" width="11" height="12" viewBox="0 0 11 12"><path d="M0 0L10.8 5.7L0 11.4Z" fill="#B2B3B4"/></svg>
<svg style="position:absolute;left:54.0px;top:764.15px;" width="20" height="20" viewBox="0 0 20 20"><rect x="1" y="2.9" width="2.6" height="11.9" fill="#9EA7AE"/><rect x="4.8" y="2.9" width="2.6" height="11.9" fill="#5DB341"/><rect x="8.6" y="0.2" width="2.6" height="14.6" fill="#9EA7AE"/><rect x="12.4" y="1.9" width="2.6" height="12.9" fill="#3FB1E4"/><rect x="16.2" y="4.9" width="2.6" height="9.9" fill="#9EA7AE"/></svg>
<div class="t" style="left:75.6px;top:765.11px;font-size:16px;line-height:16px;color:#BBBBBB;letter-spacing:-0.006px;font-weight:normal;">External Libraries</div>
<svg style="position:absolute;left:54.0px;top:790.4px;" width="20" height="20" viewBox="0 0 20 20"><rect x="1" y="0" width="12.8" height="10.6" fill="#9EA7AE"/><path d="M3.2 2.2L6.2 4.8L3.2 7.4" stroke="#2E3B44" stroke-width="1.2" fill="none"/><circle cx="14.2" cy="11.6" r="6.6" fill="#2A4A5C"/><circle cx="14.2" cy="11.6" r="5.4" fill="#3FB1E4"/><path d="M13.1 8.2L14 12L16.3 14" stroke="#1D3E52" stroke-width="1.3" fill="none"/></svg>
<div class="t" style="left:75.6px;top:791.36px;font-size:16px;line-height:16px;color:#BBBBBB;letter-spacing:-0.105px;font-weight:normal;">Scratches and Consoles</div>
<div style="position:absolute;left:500px;top:71px;width:1380px;height:784px;background:#282828;"></div>
<div class="t" style="left:801px;top:365.57px;font-size:20px;line-height:20px;color:#ABABAB;letter-spacing:0.337px;font-weight:normal;">Search Everywhere</div>
<div class="t" style="left:994.6px;top:365.57px;font-size:20px;line-height:20px;color:#589DF6;letter-spacing:0.764px;font-weight:normal;">Double Shift</div>
<div class="t" style="left:801px;top:414.87px;font-size:20px;line-height:20px;color:#ABABAB;letter-spacing:0.611px;font-weight:normal;">Go to File</div>
<div class="t" style="left:904.5px;top:414.87px;font-size:20px;line-height:20px;color:#589DF6;letter-spacing:1.255px;font-weight:normal;">Ctrl+Shift+N</div>
<div class="t" style="left:801px;top:463.67px;font-size:20px;line-height:20px;color:#ABABAB;letter-spacing:-0.064px;font-weight:normal;">Recent Files</div>
<div class="t" style="left:923.5px;top:463.67px;font-size:20px;line-height:20px;color:#589DF6;letter-spacing:0.600px;font-weight:normal;">Ctrl+E</div>
<div class="t" style="left:801px;top:511.87px;font-size:20px;line-height:20px;color:#ABABAB;letter-spacing:0.846px;font-weight:normal;">Navigation Bar</div>
<div class="t" style="left:955.8px;top:511.87px;font-size:20px;line-height:20px;color:#589DF6;letter-spacing:1.429px;font-weight:normal;">Alt+Home</div>
<div class="t" style="left:801px;top:561.07px;font-size:20px;line-height:20px;color:#ABABAB;letter-spacing:0.832px;font-weight:normal;">Drop files here to open</div>
<div style="position:absolute;left:1687px;top:706px;width:193px;height:29px;background:#FFFFFF;"></div>
<svg style="position:absolute;left:1660px;top:700px;" width="40" height="38" viewBox="0 0 40 38"><g transform="rotate(-15 20 19)"><rect x="5" y="4.5" width="29.5" height="29" rx="3.5" fill="#EE5F22"/><path d="M30 11.8C25.5 9.2 15 9.2 11.8 12.6C9.2 15.6 13 18 19 18.6C24 19 27 20.2 26 23.2C24.6 26.8 15 27.2 9.5 26.8" stroke="#FFFFFF" stroke-width="4.4" fill="none"/><path d="M16 14.2C19 13.3 24.5 13.3 29 14" stroke="#EE5F22" stroke-width="2" fill="none" stroke-linecap="round"/><path d="M10 23.2C13.5 22.8 19 22.6 21.5 22.9" stroke="#EE5F22" stroke-width="2" fill="none" stroke-linecap="round"/></g></svg>
<svg style="position:absolute;left:1704px;top:712px;" width="19" height="20" viewBox="0 0 19 20"><rect x="1.6" y="4.6" width="15.2" height="8.8" rx="1.2" fill="none" stroke="#2B79C9" stroke-width="2.5"/><path d="M9.2 1.8V17.6" stroke="#2B79C9" stroke-width="2.5" stroke-linecap="round"/></svg>
<svg style="position:absolute;left:1733px;top:712px;" width="20" height="20" viewBox="0 0 20 20"><circle cx="4" cy="6" r="2" fill="none" stroke="#2B79C9" stroke-width="1.3"/><path d="M11 10C12 10 12.5 11 12 13L10 16" stroke="#2B79C9" stroke-width="2.4" fill="none"/></svg>
<svg style="position:absolute;left:1757px;top:711px;" width="21" height="21" viewBox="0 0 21 21"><circle cx="10.5" cy="10.5" r="9" fill="none" stroke="#2B79C9" stroke-width="2"/><circle cx="7.5" cy="8" r="1.2" fill="#2B79C9"/><circle cx="13.5" cy="8" r="1.2" fill="#2B79C9"/><path d="M6 12C8 15.5 13 15.5 15 12" stroke="#2B79C9" stroke-width="1.8" fill="none"/></svg>
<svg style="position:absolute;left:1787px;top:710px;" width="16" height="22" viewBox="0 0 16 22"><rect x="5" y="1" width="6" height="12" rx="3" fill="#2B79C9"/><path d="M2 9C2 15 14 15 14 9M8 15V20M4 20H12" stroke="#2B79C9" stroke-width="2" fill="none"/></svg>
<svg style="position:absolute;left:1811px;top:713px;" width="22" height="16" viewBox="0 0 22 16"><rect x="1" y="1" width="20" height="14" rx="2" fill="#2B79C9"/><g fill="#fff"><rect x="4" y="4" width="2" height="2"/><rect x="8" y="4" width="2" height="2"/><rect x="12" y="4" width="2" height="2"/><rect x="16" y="4" width="2" height="2"/><rect x="4" y="7.5" width="2" height="2"/><rect x="8" y="7.5" width="2" height="2"/><rect x="12" y="7.5" width="2" height="2"/><rect x="16" y="7.5" width="2" height="2"/><rect x="5" y="11" width="12" height="2"/></g></svg>
<svg style="position:absolute;left:1840px;top:712px;" width="22" height="20" viewBox="0 0 22 20"><circle cx="8.5" cy="4.6" r="3.4" fill="#B9BDC4"/><path d="M2.5 17.5C2.5 11.5 4.5 9.2 8.5 9.2C12.5 9.2 14.5 11.5 14.5 17.5Z" fill="#B9BDC4"/><rect x="9.5" y="10.5" width="11.5" height="9" fill="#fff"/><rect x="11" y="12" width="2.2" height="6.5" fill="#B9BDC4"/><path d="M19.5 12.2H16.2V18.3H19.6V15.2H16.5" stroke="#B9BDC4" stroke-width="2" fill="none"/></svg>
<svg style="position:absolute;left:1866px;top:711px;" width="14" height="20" viewBox="0 0 14 20"><path d="M4 1L7 3L10 1L14 4L14 19L4 19L4 9L0 10L0 4Z" fill="#2B79C9"/></svg>
<div style="position:absolute;left:27px;top:855px;width:1853px;height:1px;background:#2A2A2A;"></div>
<div style="position:absolute;left:27px;top:856px;width:1853px;height:31px;background:#3E3F41;"></div>
<div style="position:absolute;left:27px;top:887px;width:1853px;height:1px;background:#323436;"></div>
<div style="position:absolute;left:78.5px;top:856px;width:172px;height:31px;background:#393A3C;"></div>
<div style="position:absolute;left:77px;top:856px;width:1.5px;height:31px;background:#353638;"></div>
<div style="position:absolute;left:250.5px;top:856px;width:1.5px;height:31px;background:#353638;"></div>
<div class="t" style="left:35.4px;top:865.1px;font-size:15px;line-height:15px;color:#BBBBBB;letter-spacing:0.333px;font-weight:normal;">Run:</div>
<svg style="position:absolute;left:95px;top:862px;" width="20" height="20" viewBox="0 0 20 20"><path d="M0.3 15C3 12.2 6 10.8 9.2 10.2L13.2 10.8C11.5 13.6 6.5 14.8 0.3 15Z" fill="#C9A030" stroke="#1A1200" stroke-width="0.8"/><path d="M8 5L9.5 3.6L11 5.2H13.2L14.8 3.6L15.6 5.6L15.2 9.6L12.6 11.6L9.6 11.2L8.2 8.6Z" fill="#E6CC78"/><path d="M8 5.4L9.5 3.6L11 5.2M13.2 5.2L14.8 3.6L15.6 5.8" stroke="#111" stroke-width="1.2" fill="none"/><circle cx="9.3" cy="10.2" r="1.3" fill="#111"/><circle cx="15" cy="17.2" r="3.1" fill="#145214"/><circle cx="15" cy="17.2" r="2.5" fill="#22DD22"/></svg>
<div class="t" style="left:119.5px;top:865.1px;font-size:15px;line-height:15px;color:#BBBBBB;letter-spacing:0.450px;font-weight:normal;">Tomcat 8.5.51</div>
<svg style="position:absolute;left:229px;top:869px;" width="9.5" height="9" viewBox="0 0 9.5 9"><path d="M0.5 0.5L9 8.5M9 0.5L0.5 8.5" stroke="#727476" stroke-width="1.3"/></svg>
<svg style="position:absolute;left:1834px;top:863.5px;" width="17" height="17" viewBox="0 0 17 17"><circle cx="8.5" cy="8.5" r="8" fill="#BCC0C4"/><circle cx="16.80" cy="8.50" r="2.5" fill="#3E3F41"/><circle cx="12.65" cy="15.69" r="2.5" fill="#3E3F41"/><circle cx="4.35" cy="15.69" r="2.5" fill="#3E3F41"/><circle cx="0.20" cy="8.50" r="2.5" fill="#3E3F41"/><circle cx="4.35" cy="1.31" r="2.5" fill="#3E3F41"/><circle cx="12.65" cy="1.31" r="2.5" fill="#3E3F41"/><circle cx="8.5" cy="8.5" r="2.6" fill="#3E3F41"/></svg>
<div style="position:absolute;left:1867px;top:871px;width:13px;height:2px;background:#AFB1B3;"></div>
<div style="position:absolute;left:27px;top:888px;width:1853px;height:33px;background:#3E3F41;"></div>
<div style="position:absolute;left:62.5px;top:888px;width:1.5px;height:66px;background:#353739;"></div>
<svg style="position:absolute;left:36px;top:898px;" width="20" height="20" viewBox="0 0 20 20"><path d="M12.8 5.3H8.5A5.7 5.7 0 0 0 8.5 16.7H9.5" stroke="#59A869" stroke-width="3.2" fill="none"/><path d="M12.3 1L18.3 5.4L12.3 9.2Z" fill="#59A869"/><rect x="9.4" y="10.8" width="7.8" height="7.6" fill="#3E3F41"/><rect x="10" y="11.4" width="6.7" height="6.5" fill="#B9BBBD"/></svg>
<div style="position:absolute;left:64px;top:888px;width:567px;height:33px;background:#3A3B3D;"></div>
<div style="position:absolute;left:159.8px;top:888px;width:62px;height:33px;background:#4C4F52;"></div>
<div class="t" style="left:69.9px;top:896.1px;font-size:15px;line-height:15px;color:#BBBBBB;letter-spacing:0.322px;font-weight:normal;">Deployment</div>
<div class="t" style="left:168.6px;top:896.1px;font-size:15px;line-height:15px;color:#BBBBBB;letter-spacing:0.480px;font-weight:normal;">Output</div>
<svg style="position:absolute;left:231.3px;top:897.5px;" width="15.5" height="13" viewBox="0 0 15.5 13"><rect x="0" y="0" width="15.5" height="13" fill="#AFB1B3"/><path d="M5 3L9 6.5L5 10" stroke="#3C3F41" stroke-width="2" fill="none"/></svg>
<div class="t" style="left:253.3px;top:896.1px;font-size:15px;line-height:15px;color:#BBBBBB;letter-spacing:0.021px;font-weight:normal;">Tomcat Localhost Log</div>
<svg style="position:absolute;left:413px;top:899.5px;" width="10" height="10" viewBox="0 0 10 10"><path d="M0.5 0.5L9.5 9.5M9.5 0.5L0.5 9.5" stroke="#6A6C6E" stroke-width="1.3"/></svg>
<div style="position:absolute;left:430px;top:888px;width:1.5px;height:33px;background:#343638;"></div>
<svg style="position:absolute;left:440.5px;top:897.5px;" width="15.5" height="13" viewBox="0 0 15.5 13"><rect x="0" y="0" width="15.5" height="13" fill="#AFB1B3"/><path d="M5 3L9 6.5L5 10" stroke="#3C3F41" stroke-width="2" fill="none"/></svg>
<div class="t" style="left:461.3px;top:896.1px;font-size:15px;line-height:15px;color:#BBBBBB;letter-spacing:0.017px;font-weight:normal;">Tomcat Catalina Log</div>
<svg style="position:absolute;left:613.5px;top:899.5px;" width="10" height="10" viewBox="0 0 10 10"><path d="M0.5 0.5L9.5 9.5M9.5 0.5L0.5 9.5" stroke="#6A6C6E" stroke-width="1.3"/></svg>
<div style="position:absolute;left:630.5px;top:888px;width:1.5px;height:33px;background:#343638;"></div>
<div style="position:absolute;left:64px;top:921px;width:1816px;height:5.5px;background:#4A4C4E;"></div>
<div style="position:absolute;left:27px;top:926.5px;width:1853px;height:27px;background:#3E3F41;"></div>
<div style="position:absolute;left:62.5px;top:926.5px;width:1.5px;height:27px;background:#363739;"></div>
<div style="position:absolute;left:100px;top:926.5px;width:1780px;height:27px;background:#2A2A2A;"></div>
<div style="position:absolute;left:116px;top:943px;width:1732px;height:10.5px;background:#4A4A4A;"></div>
<div class="t" style="left:41.3px;top:936.0px;font-size:13px;line-height:13px;color:#AFB1B3;letter-spacing:1.100px;font-weight:normal;">&#8250;&#8250;</div>
<div class="t" style="left:77.6px;top:936.0px;font-size:13px;line-height:13px;color:#AFB1B3;letter-spacing:0.800px;font-weight:normal;">&#8250;&#8250;</div>
<div style="position:absolute;left:27px;top:953px;width:1853px;height:1px;background:#323334;"></div>
<div style="position:absolute;left:0px;top:954px;width:1880px;height:1px;background:#47484A;"></div>
<div style="position:absolute;left:0px;top:955px;width:1880px;height:27px;background:#3E3F41;"></div>
<div style="position:absolute;left:27px;top:955px;width:88px;height:26.5px;background:#2F3132;"></div>
<svg style="position:absolute;left:41.7px;top:963.8px;" width="14" height="14" viewBox="0 0 14 14"><path d="M0 0L10.6 6L0 12Z" fill="#AFB1B3"/><circle cx="12.2" cy="11.7" r="2.5" fill="#22C622"/></svg>
<div class="t" style="left:60.9px;top:964.05px;font-size:14px;line-height:14px;color:#D4D4D4;letter-spacing:-0.120px;font-weight:normal;"><u class="s">4</u>: Run</div>
<svg style="position:absolute;left:131px;top:963.8px;" width="13" height="11.5" viewBox="0 0 13 11.5"><g fill="#AFB1B3"><rect x="0" y="0" width="2.2" height="2.2"/><rect x="3.8" y="0" width="9" height="2.2"/><rect x="0" y="4.6" width="2.2" height="2.2"/><rect x="3.8" y="4.6" width="9" height="2.2"/><rect x="0" y="9.2" width="2.2" height="2.2"/><rect x="3.8" y="9.2" width="9" height="2.2"/></g></svg>
<div class="t" style="left:150.2px;top:964.05px;font-size:14px;line-height:14px;color:#BBBBBB;letter-spacing:0.050px;font-weight:normal;"><u class="s">6</u>: TODO</div>
<svg style="position:absolute;left:236.6px;top:962.5px;" width="16" height="15" viewBox="0 0 16 15"><g fill="#AFB1B3"><rect x="0" y="0" width="11" height="3.5"/><rect x="0" y="5" width="5" height="4"/><rect x="0" y="10.5" width="5" height="4.5"/><path d="M7 5.5L15.5 10.25L7 15Z"/></g></svg>
<div class="t" style="left:257.7px;top:964.05px;font-size:14px;line-height:14px;color:#BBBBBB;letter-spacing:0.517px;font-weight:normal;">Application Servers</div>
<svg style="position:absolute;left:415.3px;top:962.5px;" width="15.5" height="14" viewBox="0 0 15.5 14"><path d="M0.5 13C0 6 6 0.5 15 0.5C15 8.5 10 13.5 2.5 12Z" fill="#AFB1B3"/><path d="M2 12C5 8 9 5 13 3" stroke="#3E3F41" stroke-width="1"/></svg>
<div class="t" style="left:435.4px;top:964.05px;font-size:14px;line-height:14px;color:#BBBBBB;letter-spacing:0.580px;font-weight:normal;">Spring</div>
<svg style="position:absolute;left:507.2px;top:962.8px;" width="14" height="13" viewBox="0 0 14 13"><rect x="0" y="0" width="14" height="13" fill="#AFB1B3"/><path d="M2.5 3L5.5 5.5L2.5 8M6.5 10H11" stroke="#3E3F41" stroke-width="1.4" fill="none"/></svg>
<div class="t" style="left:527.7px;top:964.05px;font-size:14px;line-height:14px;color:#BBBBBB;letter-spacing:0.829px;font-weight:normal;">Terminal</div>
<svg style="position:absolute;left:614px;top:964px;" width="15" height="11.5" viewBox="0 0 15 11.5"><g fill="#AFB1B3"><rect x="0" y="0" width="12" height="2.2"/><rect x="0" y="4.6" width="15" height="2.2"/><rect x="0" y="9.2" width="8" height="2.2"/></g></svg>
<div class="t" style="left:635.4px;top:964.05px;font-size:14px;line-height:14px;color:#BBBBBB;letter-spacing:0.000px;font-weight:normal;"><u class="s">0</u>: Messages</div>
<svg style="position:absolute;left:745px;top:963px;" width="16.5" height="14" viewBox="0 0 16.5 14"><rect x="0" y="0" width="14" height="13" fill="#AFB1B3"/><rect x="4.5" y="4.5" width="12" height="9.5" fill="#3E3F41"/><rect x="5.5" y="5.5" width="10.5" height="8" fill="#AFB1B3"/><path d="M8 7.5V13M11 7.5V13M14 7.5V13" stroke="#3E3F41" stroke-width="1"/></svg>
<div class="t" style="left:765.4px;top:964.05px;font-size:14px;line-height:14px;color:#BBBBBB;letter-spacing:0.221px;font-weight:normal;">Java Enterprise</div>
<svg style="position:absolute;left:1790.5px;top:962px;" width="17" height="17" viewBox="0 0 17 17"><path d="M16 8.5A7.5 7.5 0 1 0 8.5 16H16Z" stroke="#AFB1B3" stroke-width="1.6" fill="none" stroke-linejoin="round"/></svg>
<div class="t" style="left:1812px;top:964.05px;font-size:14px;line-height:14px;color:#BBBBBB;letter-spacing:0.375px;font-weight:normal;">Event Log</div>
<div style="position:absolute;left:0px;top:981.8px;width:1880px;height:1px;background:#47484A;"></div>
<div style="position:absolute;left:0px;top:982.8px;width:1880px;height:17.2px;background:#3E3F41;"></div>
<svg style="position:absolute;left:11.5px;top:989px;" width="16" height="11" viewBox="0 0 16 11"><rect x="3.5" y="0.5" width="12" height="12" fill="none" stroke="#AFB1B3" stroke-width="1.3"/><rect x="1" y="3" width="1.2" height="8" fill="#AFB1B3"/></svg>
<div class="t" style="left:40.1px;top:988.1px;font-size:15px;line-height:15px;color:#BBBBBB;letter-spacing:0.560px;font-weight:normal;">Compilation completed successfully in 3 s 304 ms (3 minutes ago)</div>
<svg style="position:absolute;left:1862px;top:989px;" width="18" height="11" viewBox="0 0 18 11"><path d="M3 6V4A3 3 0 0 1 9 4" stroke="#AFB1B3" stroke-width="1.6" fill="none"/><rect x="6" y="6" width="10" height="6" fill="#AFB1B3"/></svg>
<svg style="position:absolute;left:155.5px;top:409.5px;" width="12" height="19" viewBox="0 0 12 19"><path d="M0.5 0.5V15.5L4 12L6.5 18L9 17L6.5 11H11.5Z" fill="#FFFFFF" stroke="#000" stroke-width="1"/></svg>
</body></html>
